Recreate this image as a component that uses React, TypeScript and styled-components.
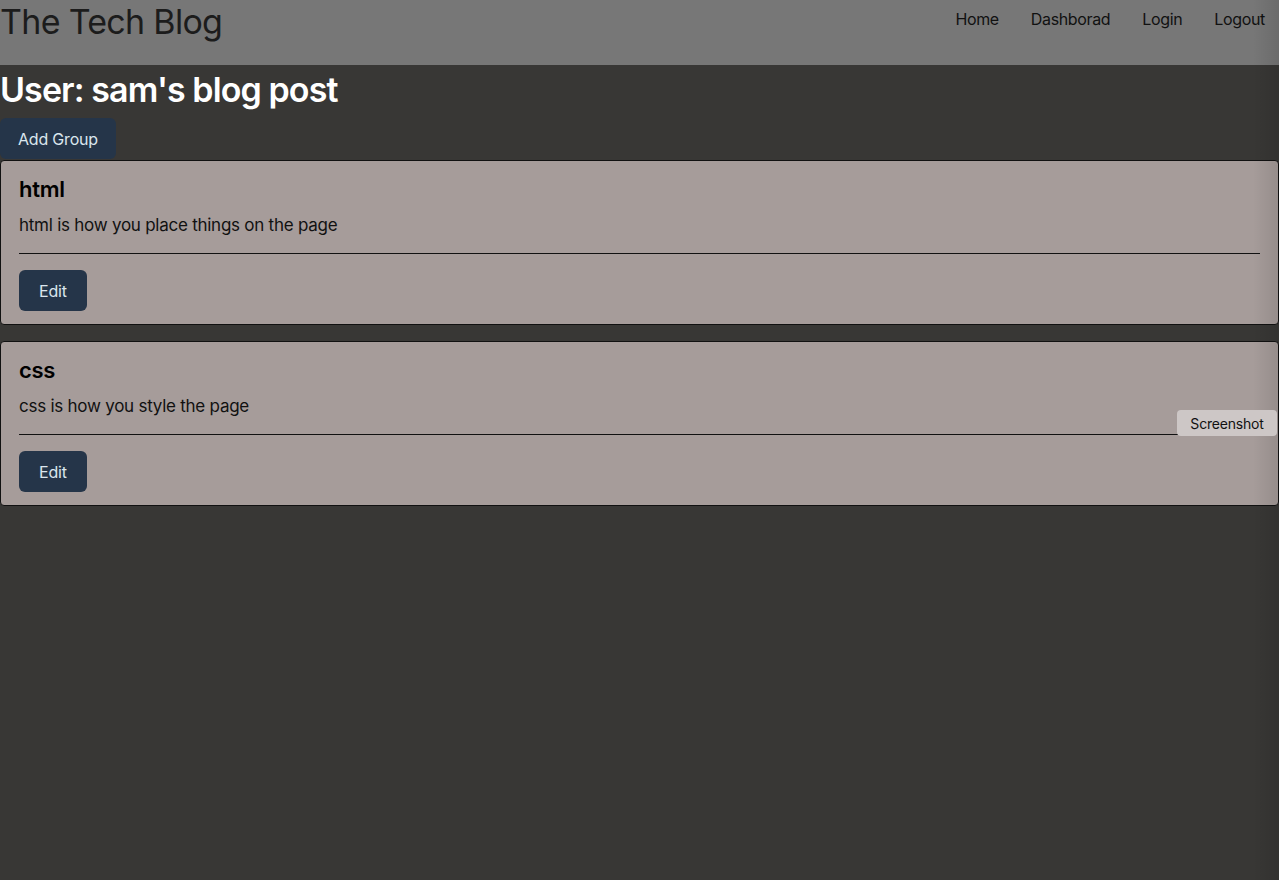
import React from "react";
import styled, { createGlobalStyle } from "styled-components";

const Global = createGlobalStyle`
  html, body { margin: 0; padding: 0; }
  body {
    background: #383735;
    font-family: Inter, "Noto Sans", "Liberation Sans", sans-serif;
    min-height: 880px;
  }
`;

const Page = styled.div`
  min-height: 880px;
  background: #383735;
  position: relative;
  overflow: hidden;
`;

const Header = styled.header`
  height: 65px;
  background: #777777;
  display: flex;
  justify-content: space-between;
  align-items: flex-start;
`;

const Brand = styled.div`
  font-size: 34px;
  line-height: 44px;
  color: #1c1c1c;
  letter-spacing: -0.7px;
`;

const Nav = styled.nav`
  display: flex;
  gap: 32px;
  padding: 8px 14px 0 0;
`;

const NavLink = styled.a`
  font-size: 16px;
  line-height: 22px;
  color: #111;
  text-decoration: none;
  letter-spacing: -0.35px;
`;

const Title = styled.h1`
  margin: 3px 0 0;
  font-size: 34px;
  line-height: 44px;
  font-weight: 600;
  color: #ffffff;
  letter-spacing: -0.9px;
`;

const Button = styled.button<{ $flat?: boolean }>`
  background: #253549;
  color: #dbe6ee;
  border: none;
  border-radius: 6px;
  font-family: inherit;
  font-size: 16px;
  letter-spacing: -0.2px;
  height: 41px;
  padding: ${(p) => (p.$flat ? "0 18px" : "0 20px")};
  cursor: pointer;
`;

const AddRow = styled.div`
  margin-top: 6px;
  height: 42px;
`;

const List = styled.div`
  display: flex;
  flex-direction: column;
  gap: 16px;
`;

const Card = styled.section`
  background: #a69c9a;
  border: 1px solid #111;
  border-radius: 4px;
  padding: 14px 18px 13px;
`;

const CardTitle = styled.h2`
  margin: 0;
  font-size: 22px;
  line-height: 28px;
  font-weight: 600;
  color: #000;
  letter-spacing: -0.3px;
`;

const CardText = styled.p`
  margin: 11px 0 0;
  font-size: 17px;
  line-height: 22px;
  color: #111;
  letter-spacing: -0.25px;
`;

const Rule = styled.hr`
  margin: 17px 0 16px;
  border: none;
  border-top: 1px solid #111;
`;

const Shade = styled.div`
  position: absolute;
  top: 0;
  right: 0;
  bottom: 0;
  width: 26px;
  pointer-events: none;
  background: linear-gradient(to right, rgba(0, 0, 0, 0), rgba(0, 0, 0, 0.1));
`;

const ShotButton = styled.button`
  position: absolute;
  top: 410px;
  left: 1177px;
  width: 100px;
  height: 26px;
  border: none;
  border-radius: 4px;
  background: #cdc7c6;
  color: #111;
  font-family: inherit;
  font-size: 14px;
  letter-spacing: -0.2px;
`;

const posts = [
  { title: "html", text: "html is how you place things on the page" },
  { title: "css", text: "css is how you style the page" },
];

export default function App() {
  return (
    <Page>
      <Global />
      <Header>
        <Brand>The Tech Blog</Brand>
        <Nav>
          <NavLink href="#">Home</NavLink>
          <NavLink href="#">Dashborad</NavLink>
          <NavLink href="#">Login</NavLink>
          <NavLink href="#">Logout</NavLink>
        </Nav>
      </Header>
      <Title>User: sam's blog post</Title>
      <AddRow>
        <Button $flat>Add Group</Button>
      </AddRow>
      <List>
        {posts.map((p) => (
          <Card key={p.title}>
            <CardTitle>{p.title}</CardTitle>
            <CardText>{p.text}</CardText>
            <Rule />
            <Button>Edit</Button>
          </Card>
        ))}
      </List>
      <Shade />
      <ShotButton>Screenshot</ShotButton>
    </Page>
  );
}
